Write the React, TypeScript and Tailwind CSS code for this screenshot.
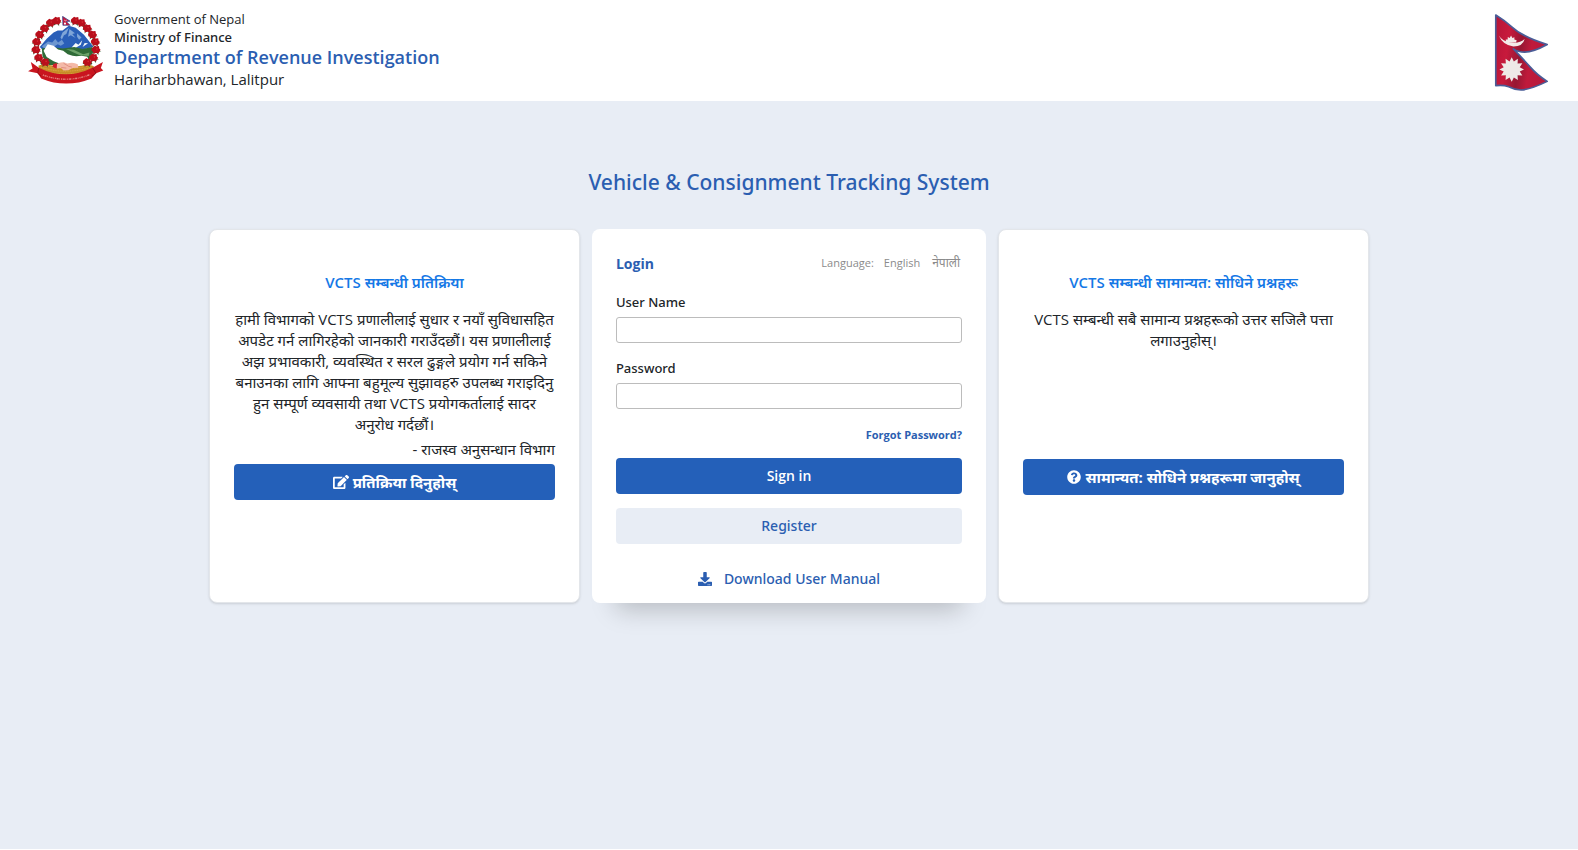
import { useState } from 'react';
import type { ReactNode } from 'react';
import { FaDownload, FaEdit, FaQuestionCircle } from 'react-icons/fa';

const FLOWERS = [
  [95, 44], [77, 50], [60, 66], [46, 84], [37, 105], [35, 128], [43, 151], [62, 164],
  [149, 44], [167, 50], [184, 66], [199, 84], [207, 105], [209, 128], [202, 151], [184, 164],
];

function Emblem() {
  return (
    <svg viewBox="12 30 220 200" className="h-[69px] w-[76px] shrink-0" role="img" aria-label="Emblem of Nepal">
      <path d="M54 170 Q24 120 54 76 Q78 46 104 44 M192 170 Q220 120 190 76 Q168 46 142 44" fill="none" stroke="#2e5b2c" strokeWidth="7" strokeDasharray="6 6" />
      <path d="M46 120 L66 96 L86 78 L98 72 L112 72 L130 58 L150 64 L174 84 L202 120 L150 132 L56 130Z" fill="#2a5fb8" />
      <path d="M52 118 L70 104 L82 107 L91 97 L99 107 L110 99 L117 110 L107 116 L98 112 L82 122 L58 123Z" fill="#6d97d0" />
      <path d="M112 78 L130 64 L123 82 L116 86 L110 98 L106 92Z M132 68 L148 80 L140 82 L150 94 L136 86 L128 90Z M154 80 L167 92 L160 99 L154 90Z" fill="#7fa5d8" />
      <path d="M138 121 L150 108 L158 113 L169 100 L165 113 L154 120 L143 127Z M176 108 L186 109 L170 120Z" fill="#f6fafc" />
      <path d="M52 124 L80 120 L112 124 L146 120 L170 126 L198 120 L201 134 L194 151 L178 172 L72 172 L54 148Z" fill="#2f6b37" />
      <path d="M122 126 L144 128 L172 141 L190 136 L188 146 L160 143Z" fill="#6ca36a" />
      <path d="M69 112 L86 116 L99 127 L114 131 L127 141 L141 145 L152 147 L167 145 L184 148 L190 164 L182 178 L150 176 L122 171 L103 168 L86 161 L66 149 L57 131Z" fill="#fff" />
      <path d="M42 174 Q54 168 73 172 Q120 180 168 174 Q190 168 203 176 L196 198 Q122 222 48 197Z" fill="#c78c28" />
      <path d="M50 179 Q120 201 194 179 M48 187 Q120 210 197 187 M60 174 Q120 190 185 175" fill="none" stroke="#e4bd55" strokeWidth="2" strokeDasharray="3 2" />
      <path d="M92 173 Q101 163 116 164 L126 168 Q142 162 156 170 L158 180 L141 181 L129 187 L115 188 L107 181 L94 182Z" fill="#f4b9a7" />
      <path d="M115 167 L130 176 L139 178 M108 179 L123 181" fill="none" stroke="#d97c70" strokeWidth="2" />
      <path d="M85 169 L96 166 L95 183 L83 178Z" fill="#d11f2c" />
      {FLOWERS.map(([x, y]) => (
        <g key={`${x}-${y}`} transform={`translate(${x} ${y}) scale(1.2)`}>
          <path d="M-12 4 L-4 -3 L-7 12 L0 5 L6 13 L5 1 L13 4Z" fill="#285e2c" />
          <path d="M-10 -4 L-5 -8 L-3 -10 L1 -8 L7 -9 L8 -3 L11 0 L8 5 L6 9 L0 8 L-6 9 L-8 4 L-11 1Z" fill="#b90f1c" />
          <circle cx="2" cy="-2" r="2" fill="#d62a33" />
        </g>
      ))}
      <path d="M112 31 L134 45 L123 46 L134 57 L113 57Z" fill="#c8183b" stroke="#27488f" strokeWidth="2" />
      <circle cx="119" cy="52" r="3" fill="#fff" />
      <path d="M117 42 Q120 46 124 42" stroke="#fff" strokeWidth="2" fill="none" />
      <path d="M20 163 L43 180 Q120 218 199 180 L229 163 L223 181 L230 188 L209 196 L196 211 Q122 241 50 211 L40 196 L12 190 L25 182Z" fill="#c9151f" />
      <path d="M43 180 L40 196 L50 204 M199 180 L209 196 L197 204" fill="none" stroke="#7e0c15" strokeWidth="2" />
      <path d="M55 201 Q122 226 192 200" fill="none" stroke="#e58580" strokeWidth="4" strokeDasharray="3 2 6 2 2 3" />
    </svg>
  );
}

// 12-pointed sun, alternating between an outer and an inner radius
const sunPoints = Array.from({ length: 24 }, (_, i) => {
  const r = i % 2 ? 25 : 37;
  const a = (i * Math.PI) / 12;
  return `${93 + r * Math.sin(a)},${194 - r * Math.cos(a)}`;
}).join(' ');

function Flag() {
  return (
    <svg viewBox="40 24 168 238" className="mt-1 h-[79px] w-[56px] shrink-0" role="img" aria-label="Flag of Nepal">
      <defs>
        <linearGradient id="cloth" x1="0" y1="0" x2="1" y2="0.2">
          <stop offset="0" stopColor="#b51538" />
          <stop offset="0.3" stopColor="#c81a3c" />
          <stop offset="0.55" stopColor="#961733" />
          <stop offset="0.75" stopColor="#c01a3b" />
          <stop offset="1" stopColor="#b81a3c" />
        </linearGradient>
      </defs>
      <path
        d="M45 30 Q74 48 95 67 Q126 96 200 119 Q158 142 132 142 Q112 142 98 132 Q126 161 149 187 Q170 211 200 230 Q151 254 121 256 Q101 255 84 246 Q66 240 45 243Z"
        fill="url(#cloth)"
        stroke="#4a5d97"
        strokeWidth="5"
        strokeLinejoin="round"
      />
      <path d="M54 92 Q68 113 91 112 Q114 117 132 102 Q127 124 98 125 Q66 121 54 92Z" fill="#f3ebe9" />
      <path d="M76 112 L75 104 L81 104 L81 96 L87 99 L91 92 L95 99 L101 97 L101 104 L108 106 L106 113Z" fill="#f3ebe9" />
      <polygon points={sunPoints} fill="#efe9e7" />
    </svg>
  );
}

function InfoCard({ title, children }: { title: string; children: ReactNode }) {
  return (
    <section className="flex flex-col rounded-lg border border-[#e3e6ea] bg-white px-6 pt-10 shadow-sm">
      <h2 className="mb-[15px] text-center text-[15px] leading-6 font-semibold text-[#1578e6]">{title}</h2>
      {children}
    </section>
  );
}

function Field({ id, label, type }: { id: string; label: string; type: string }) {
  return (
    <div className="mb-[15px]">
      <label htmlFor={id} className="mb-[5px] block font-['Noto_Sans',sans-serif] text-[13px] leading-5 font-medium">{label}</label>
      <input id={id} type={type} className="block h-[26px] w-full rounded-[3px] border border-[#bcbcbc] bg-white px-2 text-sm outline-none focus:border-[#2460b9]" />
    </div>
  );
}

const button = 'flex h-9 w-full items-center justify-center rounded-[4px]';

export default function App() {
  const [lang, setLang] = useState('en');

  return (
    <div className="flex min-h-screen flex-col bg-white pb-px font-['Open_Sans','Noto_Sans','Noto_Sans_Devanagari',sans-serif] text-[#212529]">
      <header className="flex items-center justify-between px-7 py-[9px]">
        <div className="flex items-center gap-[10px]">
          <Emblem />
          <div>
            <p className="text-[13px] leading-[18px]">Government of Nepal</p>
            <p className="font-['Noto_Sans',sans-serif] text-[13px] leading-[18px] font-medium">Ministry of Finance</p>
            <p className="text-lg leading-[22px] font-semibold text-[#2b5eb1]">Department of Revenue Investigation</p>
            <p className="text-[15px] leading-[23px]">Hariharbhawan, Lalitpur</p>
          </div>
        </div>
        <Flag />
      </header>

      <main className="flex-1 bg-[#e8edf5] px-4 pt-[65px]">
        <h1 className="text-center font-['Noto_Sans',sans-serif] text-[21px] leading-8 font-medium text-[#2b5eb1]">Vehicle &amp; Consignment Tracking System</h1>

        <div className="mx-auto mt-[31px] grid max-w-[1160px] gap-3 md:grid-cols-[16fr_17fr_16fr]">
          <InfoCard title="VCTS सम्बन्धी प्रतिक्रिया">
            <p className="mb-1 text-center text-[15px] leading-[21px]">
              हामी विभागको VCTS प्रणालीलाई सुधार र नयाँ सुविधासहित अपडेट गर्न लागिरहेको जानकारी गराउँदछौं। यस प्रणालीलाई अझ प्रभावकारी, व्यवस्थित र सरल ढुङ्गले प्रयोग गर्न सकिने बनाउनका लागि आफ्ना बहुमूल्य सुझावहरु उपलब्ध गराइदिनु हुन सम्पूर्ण व्यवसायी तथा VCTS प्रयोगकर्तालाई सादर अनुरोध गर्दछौं।
            </p>
            <p className="mb-1 text-right text-[15px] leading-[21px]">- राजस्व अनुसन्धान विभाग</p>
            <button type="button" className={`${button} gap-1 bg-[#2460b9] text-[15px] font-bold text-white`}>
              <FaEdit className="size-4" />
              प्रतिक्रिया दिनुहोस्
            </button>
          </InfoCard>

          <section className="rounded-lg bg-white px-6 pt-6 pb-[13px] shadow-[0_30px_24px_-24px_rgba(0,0,0,0.22)]">
            <div className="mb-[17px] flex items-center justify-between">
              <h2 className="text-sm leading-[22px] font-bold text-[#2b5eb1]">Login</h2>
              <div className="flex items-center pr-[2px] pb-[2px] text-[11px] leading-5 text-[#8b8b8b]">
                <span className="mr-[10px]">Language:</span>
                <button type="button" aria-pressed={lang === 'en'} onClick={() => setLang('en')}>English</button>
                <button type="button" aria-pressed={lang === 'ne'} onClick={() => setLang('ne')} className="ml-3 text-xs leading-5">नेपाली</button>
              </div>
            </div>
            <form onSubmit={(e) => e.preventDefault()}>
              <Field id="username" label="User Name" type="text" />
              <Field id="password" label="Password" type="password" />
              <div className="mt-4 mb-[13px] text-right text-[11px] leading-5">
                <a href="#forgot" className="font-bold text-[#2b5eb1]">Forgot Password?</a>
              </div>
              <button type="submit" className={`${button} mb-[14px] bg-[#2460b9] text-sm font-semibold text-white`}>Sign in</button>
              <button type="button" className={`${button} bg-[#e8edf5] font-['Noto_Sans',sans-serif] text-sm font-medium text-[#2b5eb1]`}>Register</button>
            </form>
            <a href="#manual" className="mt-6 flex items-center justify-center gap-3 font-['Noto_Sans',sans-serif] text-sm leading-[22px] font-medium text-[#2b5eb1]">
              <FaDownload className="size-[14px]" />
              Download User Manual
            </a>
          </section>

          <InfoCard title="VCTS सम्बन्धी सामान्यत: सोधिने प्रश्नहरू">
            <p className="mb-[108px] text-center text-[15px] leading-[21px]">
              VCTS सम्बन्धी सबै सामान्य प्रश्नहरूको उत्तर सजिलै पत्ता लगाउनुहोस्।
            </p>
            <button type="button" className={`${button} gap-1 bg-[#2460b9] text-[15px] font-bold text-white`}>
              <FaQuestionCircle className="size-[14px]" />
              सामान्यत: सोधिने प्रश्नहरूमा जानुहोस्
            </button>
          </InfoCard>
        </div>
      </main>
    </div>
  );
}
